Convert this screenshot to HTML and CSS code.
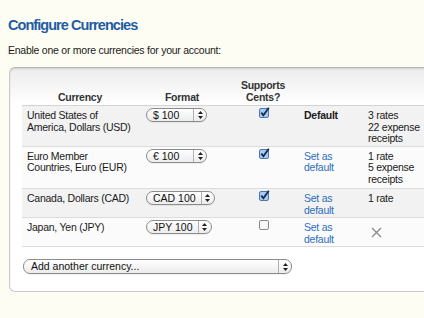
FILE: index.html
```html
<!DOCTYPE html>
<html lang="en">
<head>
    <meta charset="UTF-8">
    <meta name="viewport" content="width=device-width, initial-scale=1.0">
    <title>Configure Currencies</title>
    <link rel="stylesheet" href="styles.css">
</head>
<body>
    <h1 class="page-title">Configure Currencies</h1>
    <p class="intro">Enable one or more currencies for your account:</p>

    <div class="panel">
        <table class="currencies">
            <thead>
                <tr>
                    <th class="col-currency">Currency</th>
                    <th class="col-format">Format</th>
                    <th class="col-cents">Supports<br>Cents?</th>
                    <th class="col-default"></th>
                    <th class="col-usage"></th>
                </tr>
            </thead>
            <tbody>
                <tr class="row-alt">
                    <td class="col-currency">United States of<br>America, Dollars (USD)</td>
                    <td class="col-format">
                        <span class="select select-fixed">
                            <span class="select-label">$ 100</span>
                            <span class="select-arrows"><svg width="5" height="8" viewBox="0 0 5 8"><path d="M2.5 0L5 3H0z M2.5 8L0 5h5z" fill="#222"/></svg></span>
                        </span>
                    </td>
                    <td class="col-cents">
                        <svg class="checkbox" width="11" height="11" viewBox="0 0 11 11"><rect x="0.5" y="1.5" width="9" height="9" rx="1.5" fill="#a9cbf2" stroke="#4a78b3"/><path d="M2.3 5.6L4.4 8.2L9.8 0.8" fill="none" stroke="#172a4f" stroke-width="1.8"/></svg>
                    </td>
                    <td class="col-default"><strong>Default</strong></td>
                    <td class="col-usage">3 rates<br>22 expense<br>receipts</td>
                </tr>
                <tr>
                    <td class="col-currency">Euro Member<br>Countries, Euro (EUR)</td>
                    <td class="col-format">
                        <span class="select select-fixed">
                            <span class="select-label">€ 100</span>
                            <span class="select-arrows"><svg width="5" height="8" viewBox="0 0 5 8"><path d="M2.5 0L5 3H0z M2.5 8L0 5h5z" fill="#222"/></svg></span>
                        </span>
                    </td>
                    <td class="col-cents">
                        <svg class="checkbox" width="11" height="11" viewBox="0 0 11 11"><rect x="0.5" y="1.5" width="9" height="9" rx="1.5" fill="#a9cbf2" stroke="#4a78b3"/><path d="M2.3 5.6L4.4 8.2L9.8 0.8" fill="none" stroke="#172a4f" stroke-width="1.8"/></svg>
                    </td>
                    <td class="col-default"><a href="#" class="link">Set as<br>default</a></td>
                    <td class="col-usage">1 rate<br>5 expense<br>receipts</td>
                </tr>
                <tr class="row-alt">
                    <td class="col-currency">Canada, Dollars (CAD)</td>
                    <td class="col-format">
                        <span class="select">
                            <span class="select-label">CAD 100</span>
                            <span class="select-arrows"><svg width="5" height="8" viewBox="0 0 5 8"><path d="M2.5 0L5 3H0z M2.5 8L0 5h5z" fill="#222"/></svg></span>
                        </span>
                    </td>
                    <td class="col-cents">
                        <svg class="checkbox" width="11" height="11" viewBox="0 0 11 11"><rect x="0.5" y="1.5" width="9" height="9" rx="1.5" fill="#a9cbf2" stroke="#4a78b3"/><path d="M2.3 5.6L4.4 8.2L9.8 0.8" fill="none" stroke="#172a4f" stroke-width="1.8"/></svg>
                    </td>
                    <td class="col-default"><a href="#" class="link">Set as<br>default</a></td>
                    <td class="col-usage">1 rate</td>
                </tr>
                <tr>
                    <td class="col-currency">Japan, Yen (JPY)</td>
                    <td class="col-format">
                        <span class="select">
                            <span class="select-label">JPY 100</span>
                            <span class="select-arrows"><svg width="5" height="8" viewBox="0 0 5 8"><path d="M2.5 0L5 3H0z M2.5 8L0 5h5z" fill="#222"/></svg></span>
                        </span>
                    </td>
                    <td class="col-cents">
                        <svg class="checkbox" width="11" height="11" viewBox="0 0 11 11"><rect x="0.5" y="1.5" width="9" height="9" rx="1.5" fill="#f7f7f7" stroke="#8a8a8a"/></svg>
                    </td>
                    <td class="col-default"><a href="#" class="link">Set as<br>default</a></td>
                    <td class="col-usage">
                        <svg class="remove" width="11" height="11" viewBox="0 0 11 11"><path d="M1 1L10 10M10 1L1 10" stroke="#8c8c8c" stroke-width="1.4"/></svg>
                    </td>
                </tr>
            </tbody>
        </table>

        <div class="add-row">
            <span class="select select-wide">
                <span class="select-label">Add another currency...</span>
                <span class="select-arrows"><svg width="5" height="8" viewBox="0 0 5 8"><path d="M2.5 0L5 3H0z M2.5 8L0 5h5z" fill="#222"/></svg></span>
            </span>
        </div>
    </div>
</body>
</html>
```

FILE: styles.css
```css
* {
    margin: 0;
    padding: 0;
    box-sizing: border-box;
}

body {
    font-family: 'Liberation Sans', Arial, sans-serif;
    font-size: 10.5px;
    line-height: 11.5px;
    letter-spacing: -0.25px;
    color: #1a1a1a;
    background: #fdfdf3;
    padding: 0 8px;
    overflow: hidden;
    height: 100vh;
}

.page-title {
    font-size: 14.5px;
    line-height: 18px;
    font-weight: bold;
    color: #1f5ca6;
    letter-spacing: -0.95px;
    padding-top: 16px;
}

.intro {
    margin-top: 9px;
    line-height: 14px;
}

.panel {
    margin: 10px 0 0 1px;
    width: 440px;
    padding: 12px 12px 17px;
    background: linear-gradient(#ececec, #ffffff 36px);
    border: 1px solid #c9c9c9;
    border-top-color: #b4b4b4;
    border-radius: 6px;
    box-shadow: inset 0 1px 2px rgba(0, 0, 0, 0.12);
}

.currencies {
    border-collapse: collapse;
    width: 420px;
}

.currencies th {
    font-weight: bold;
    color: #333;
    text-align: center;
    vertical-align: bottom;
    padding: 0 0 2px;
}

.currencies thead tr {
    border-bottom: 1px solid #d4d4d4;
}

.currencies tbody tr {
    border-bottom: 1px solid #dcdcdc;
    background: #fbfbfb;
}

.currencies tbody tr.row-alt {
    background: #f2f2f2;
}

.currencies td {
    vertical-align: top;
    padding: 4px 4px 1px;
}

.currencies tbody tr:nth-child(2) td { padding-bottom: 3px; }

.col-currency { width: 116px; }
.col-format { width: 88px; }
.col-cents { width: 74px; }
.col-default { width: 64px; }

td.col-currency { padding-left: 5px; }
td.col-format { padding-left: 8px; padding-top: 2px; }
td.col-cents { text-align: center; padding-top: 1px; }
td.col-cents .checkbox { display: inline-block; margin-left: 2px; }

.link {
    color: #2b6fbd;
    text-decoration: none;
}

.remove {
    display: block;
    margin: 5px 0 0 3px;
}

.select {
    display: inline-flex;
    align-items: stretch;
    height: 14px;
    border: 1px solid #8c8c8c;
    border-radius: 7px;
    background: linear-gradient(#ffffff, #ececec);
    box-shadow: 0 1px 0 rgba(0, 0, 0, 0.06);
    font-size: 10.5px;
    line-height: 12px;
    letter-spacing: 0;
    color: #111;
}

.select-label {
    flex: 1;
    padding: 0 5px 0 6px;
    white-space: nowrap;
}

.select-arrows {
    width: 13px;
    border-left: 1px solid #b0b0b0;
    display: flex;
    align-items: center;
    justify-content: center;
}

.select-fixed { width: 61px; }

.add-row {
    margin-top: 12px;
    padding-left: 1px;
}

.select-wide {
    width: 269px;
    height: 15px;
}

.select-wide .select-label {
    padding-left: 7px;
    line-height: 13px;
}
```
